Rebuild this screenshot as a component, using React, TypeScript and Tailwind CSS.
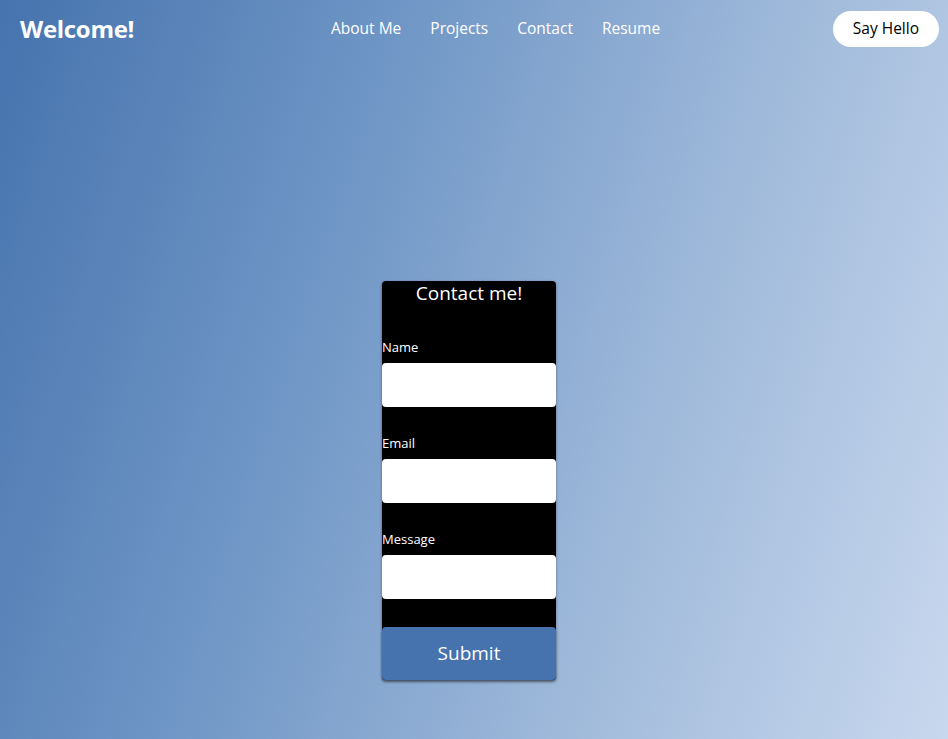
import React from "react";

const font = { fontFamily: '"Open Sans", "Noto Sans", sans-serif' };

function Field({ label, id }: { label: string; id: string }) {
    return (
        <div className="flex flex-col gap-[7px] mt-[28px]">
            <label htmlFor={id} className="text-[13px] leading-[17px] text-white">{label}</label>
            <input id={id} type="text" className="h-[44px] w-full rounded bg-white outline-none px-2 text-black" />
        </div>
    )
}

export default function App() {
    return (
        <div
            style={font}
            className="min-h-[739px] w-full flex flex-col bg-[linear-gradient(108deg,#4673ae_0%,#7097c6_35%,#a3bcdc_70%,#c8d8ee_100%)]"
        >
            <header className="h-[56px] pt-[2px] flex items-center pl-[20px] pr-[9px]">
                <div className="w-[200px]">
                    <h1 className="text-[24px] font-bold text-white tracking-[-0.3px]">Welcome!</h1>
                </div>
                <nav className="flex gap-[29px] text-[15.5px] text-white ml-[111px]">
                    <a href="#">About Me</a>
                    <a href="#">Projects</a>
                    <a href="#">Contact</a>
                    <a href="#">Resume</a>
                </nav>
                <button className="ml-auto h-[36px] px-[20px] rounded-full bg-white text-[15.5px] text-black">Say Hello</button>
            </header>

            <main className="flex justify-center pt-[225px] pr-[10px]">
                <form className="w-[174px] bg-black rounded flex flex-col shadow-[0_1px_3px_rgba(0,0,0,0.4)]">
                    <h2 className="text-[19px] leading-[24px] text-white text-center">Contact me!</h2>
                    <div className="mt-[6px]">
                        <Field label="Name" id="name" />
                    </div>
                    <Field label="Email" id="email" />
                    <Field label="Message" id="message" />
                    <button type="button" className="mt-[28px] h-[53px] rounded bg-[#4672ad] text-white text-[19px] shadow-[0_2px_3px_rgba(0,0,0,0.35)]">
                        Submit
                    </button>
                </form>
            </main>
        </div>
    )
}
